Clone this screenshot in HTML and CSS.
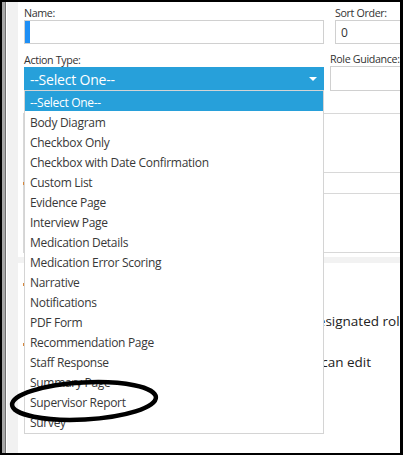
FILE: index.html
```html
<!DOCTYPE html>
<html lang="en">
<head>
<meta charset="UTF-8" />
<title>Action Editor</title>
<link rel="stylesheet" href="styles.css">
</head>
<body>
  <div class="screen">
    <div class="edge"></div>
    <div class="gutter"></div>
    <div class="page">
      <!-- top fields -->
      <div class="row">
        <div class="field name">
          <div class="label">Name:</div>
          <div class="input"><span class="focus-bar"></span></div>
        </div>
        <div class="field sort">
          <div class="label">Sort Order:</div>
          <div class="input">0</div>
        </div>
      </div>

      <div class="row second">
        <div class="field name">
          <div class="label">Action Type:</div>
          <div class="select">--Select One--<span class="arrow"></span></div>
        </div>
        <div class="field role">
          <div class="label">Role Guidance:</div>
          <div class="input tall"></div>
        </div>
      </div>

      <!-- settings grid under the open dropdown -->
      <div class="grid-box">
        <div class="cell big"></div>
        <div class="cell small"><span class="req"></span></div>
        <div class="cell big"></div>
      </div>
      <div class="band"></div>

      <div class="access">
        <div class="access-head"><span class="req"></span></div>
        <div class="opt"><span class="opt-col narrow"></span>Only users in the designated role</div>
        <div class="access-head short"><span class="req"></span></div>
        <div class="opt"><span class="opt-col"></span>Only a supervisor can edit</div>
      </div>

      <!-- open dropdown list -->
      <ul class="dropdown">
        <li class="active">--Select One--</li>
        <li>Body Diagram</li>
        <li>Checkbox Only</li>
        <li>Checkbox with Date Confirmation</li>
        <li>Custom List</li>
        <li>Evidence Page</li>
        <li>Interview Page</li>
        <li>Medication Details</li>
        <li>Medication Error Scoring</li>
        <li>Narrative</li>
        <li>Notifications</li>
        <li>PDF Form</li>
        <li>Recommendation Page</li>
        <li>Staff Response</li>
        <li>Summary Page</li>
        <li>Supervisor Report</li>
        <li>Survey</li>
      </ul>
    </div>

    <!-- hand-drawn circle around Supervisor Report -->
    <svg class="mark" width="160" height="50" viewBox="0 0 160 50">
      <ellipse cx="82" cy="25" rx="72" ry="18.5" transform="rotate(-3 82 25)" fill="none" stroke="#000" stroke-width="4.5"/>
    </svg>
  </div>
</body>
</html>
```

FILE: styles.css
```css
html, body {
  margin: 0;
  padding: 0;
  background: #fff;
}
.screen {
  position: relative;
  display: flex;
  width: 403px;
  height: 455px;
  box-sizing: border-box;
  border: 2px solid #000;
  border-right-width: 3px;
  overflow: hidden;
  font-family: "Open Sans", "Noto Sans", sans-serif;
  color: #2e2e2e;
}
.edge {
  width: 3px;
  background: #a6a6a6;
  border-right: 1px solid #707070;
}
.gutter {
  width: 11px;
  background: #f1f1f1;
  border-left: 1px solid #fff;
}
.page {
  position: relative;
  flex: 1;
  padding: 4px 0 0 6px;
  background: #fff;
  overflow: hidden;
}
.row {
  display: flex;
  gap: 11px;
}
.row.second {
  margin-top: 9px;
  gap: 6px;
}
.field.name {
  width: 300px;
  flex-shrink: 0;
}
.field.sort,
.field.role {
  width: 90px;
  flex-shrink: 0;
}
.field.role {
  margin-top: -1px;
}
.label {
  height: 14px;
  font-size: 10.7px;
  line-height: 14px;
  color: #333;
  letter-spacing: -0.35px;
  white-space: nowrap;
}
.input {
  position: relative;
  height: 24px;
  box-sizing: border-box;
  border: 1px solid #d0d0d0;
  padding-left: 5px;
  font-size: 12px;
  line-height: 23px;
  color: #333;
}
.input.tall {
  height: 25px;
}
.focus-bar {
  position: absolute;
  left: 0;
  top: 0;
  bottom: 0;
  width: 5px;
  background: #1e8ff5;
}
.select {
  display: flex;
  align-items: center;
  justify-content: space-between;
  height: 23px;
  padding: 1px 7px 0 6px;
  box-sizing: border-box;
  background: #27a0da;
  color: #fff;
  font-size: 14px;
  letter-spacing: -0.2px;
}
.arrow {
  width: 0;
  height: 0;
  border-left: 4px solid transparent;
  border-right: 4px solid transparent;
  border-top: 4px solid #fff;
}
.grid-box {
  margin: 22px 0 0 -1px;
  border: 1px solid #d8d8d8;
  border-right: none;
}
.cell {
  border-bottom: 1px solid #d8d8d8;
}
.cell:last-child {
  border-bottom: none;
}
.cell.big {
  height: 58px;
}
.cell.small {
  height: 20px;
  display: flex;
  align-items: center;
}
.req {
  display: inline-block;
  width: 1px;
  height: 3px;
  margin-left: -1px;
  background: #d8873a;
}
.band {
  height: 6px;
  margin: 4px 0 0 -6px;
  background: #f2f2f2;
}
.access {
  margin-top: 14px;
  font-size: 13.5px;
  color: #222;
}
.access-head {
  display: flex;
  align-items: center;
  height: 14px;
}
.access-head.short {
  height: 12px;
  margin-top: 7px;
}
.opt {
  display: flex;
  height: 20px;
  line-height: 20px;
  white-space: nowrap;
  margin-top: 20px;
}
.access-head.short + .opt {
  margin-top: 2px;
}
.opt-col {
  width: 184px;
  flex-shrink: 0;
}
.opt-col.narrow {
  width: 176px;
}
.dropdown {
  position: absolute;
  left: 6px;
  top: 88px;
  width: 300px;
  box-sizing: border-box;
  margin: 0;
  padding: 0 0 2px;
  list-style: none;
  background: #fff;
  border: 1px solid #d4d4d4;
}
.dropdown li {
  height: 20px;
  padding-left: 5px;
  font-size: 12px;
  line-height: 23px;
  letter-spacing: -0.3px;
  color: #383838;
  white-space: nowrap;
  overflow: hidden;
}
.dropdown li.active {
  background: #27a0da;
  color: #fff;
}
.mark {
  position: absolute;
  left: 0;
  top: 374px;
}
```
